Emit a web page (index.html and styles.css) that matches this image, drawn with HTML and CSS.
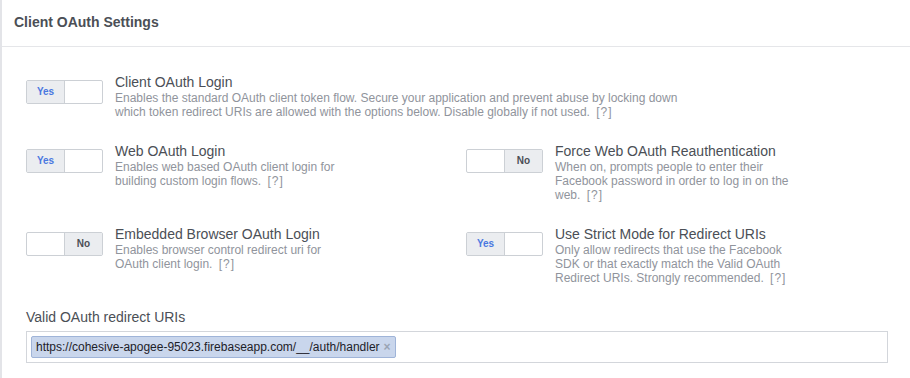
FILE: index.html
```html
<!DOCTYPE html>
<html lang="en">
<head>
    <meta charset="UTF-8">
    <title>Client OAuth Settings</title>
    <link rel="stylesheet" href="styles.css">
</head>
<body>

<div class="panel">
    <!-- header -->
    <div class="panel-header">Client OAuth Settings</div>

    <div class="panel-body">
        <div class="setting setting-wide">
            <div class="toggle">
                <div class="toggle-half on">Yes</div>
                <div class="toggle-half"></div>
            </div>
            <div class="setting-text">
                <div class="setting-title">Client OAuth Login</div>
                <div class="setting-desc">Enables the standard OAuth client token flow. Secure your application and prevent abuse by locking down which token redirect URIs are allowed with the options below. Disable globally if not used. <span class="help">[?]</span></div>
            </div>
        </div>

        <div class="settings-grid">
            <div class="setting">
                <div class="toggle">
                    <div class="toggle-half on">Yes</div>
                    <div class="toggle-half"></div>
                </div>
                <div class="setting-text">
                    <div class="setting-title">Web OAuth Login</div>
                    <div class="setting-desc">Enables web based OAuth client login for building custom login flows. <span class="help">[?]</span></div>
                </div>
            </div>

            <div class="setting">
                <div class="toggle">
                    <div class="toggle-half"></div>
                    <div class="toggle-half on no">No</div>
                </div>
                <div class="setting-text">
                    <div class="setting-title">Force Web OAuth Reauthentication</div>
                    <div class="setting-desc">When on, prompts people to enter their Facebook password in order to log in on the web. <span class="help">[?]</span></div>
                </div>
            </div>

            <div class="setting">
                <div class="toggle">
                    <div class="toggle-half"></div>
                    <div class="toggle-half on no">No</div>
                </div>
                <div class="setting-text">
                    <div class="setting-title">Embedded Browser OAuth Login</div>
                    <div class="setting-desc">Enables browser control redirect uri for OAuth client login. <span class="help">[?]</span></div>
                </div>
            </div>

            <div class="setting">
                <div class="toggle">
                    <div class="toggle-half on">Yes</div>
                    <div class="toggle-half"></div>
                </div>
                <div class="setting-text">
                    <div class="setting-title">Use Strict Mode for Redirect URIs</div>
                    <div class="setting-desc">Only allow redirects that use the Facebook SDK or that exactly match the Valid OAuth Redirect URIs. Strongly recommended. <span class="help">[?]</span></div>
                </div>
            </div>
        </div>

        <!-- redirect uris -->
        <div class="field-label">Valid OAuth redirect URIs</div>
        <div class="token-input">
            <span class="token">https://cohesive-apogee-95023.firebaseapp.com/__/auth/handler<span class="token-remove">×</span></span>
        </div>
    </div>
</div>

</body>
</html>
```

FILE: styles.css
```css
:root {
    --title-color: #4b4f56;
    --desc-color: #90949c;
    --border-color: #ccd0d5;
    --toggle-blue: #4a78e0;
}

body {
    margin: 0;
    font-family: 'Liberation Sans', Arial, sans-serif;
    background-color: #ffffff;
}

.panel {
    height: 378px;
    overflow: hidden;
    border-left: 2px solid #e3e4e8;
    background-color: #ffffff;
}

.panel-header {
    padding: 13px 12px 15px;
    font-size: 14px;
    line-height: 18px;
    font-weight: bold;
    color: var(--title-color);
    border-bottom: 1px solid #e5e6e9;
}

.panel-body {
    padding: 26px 22px 0 24px;
}

/* toggle rows */
.setting {
    display: flex;
    gap: 12px;
}

.setting-wide {
    margin-bottom: 23px;
}

.setting-wide .setting-text {
    width: 580px;
}

.settings-grid {
    display: grid;
    grid-template-columns: 440px 1fr;
    row-gap: 23px;
}

.toggle {
    display: flex;
    flex: none;
    box-sizing: border-box;
    width: 77px;
    height: 24px;
    margin-top: 6.5px;
    border: 1px solid var(--border-color);
    border-radius: 2px;
    background-color: #ffffff;
}

.toggle-half {
    flex: 1;
    display: flex;
    align-items: center;
    justify-content: center;
    font-size: 10px;
    font-weight: bold;
}

.toggle-half.on {
    background-color: #ebedf0;
    color: var(--toggle-blue);
    border-right: 1px solid var(--border-color);
}

.toggle-half.on.no {
    color: #4b4f56;
    border-right: none;
    border-left: 1px solid var(--border-color);
}

.setting-text {
    width: 238px;
}

.setting-title {
    font-size: 14px;
    line-height: 18px;
    color: var(--title-color);
}

.setting-desc {
    font-size: 12px;
    line-height: 14px;
    color: var(--desc-color);
}

.help {
    margin-left: 3px;
    letter-spacing: 1px;
}

/* redirect uri field */
.field-label {
    margin-top: 23px;
    font-size: 14px;
    line-height: 18px;
    color: var(--title-color);
}

.token-input {
    box-sizing: border-box;
    height: 32px;
    margin-top: 5px;
    padding: 4px;
    border: 1px solid #d3d6db;
}

.token {
    display: inline-flex;
    align-items: center;
    box-sizing: border-box;
    height: 22px;
    padding: 0 4px;
    font-size: 12px;
    color: #1d2129;
    background-color: #c9d6ec;
    border: 1px solid #9fb4d8;
    border-radius: 2px;
}

.token-remove {
    margin-left: 4px;
    font-size: 12px;
    font-weight: bold;
    color: #9aa4b4;
}
```
